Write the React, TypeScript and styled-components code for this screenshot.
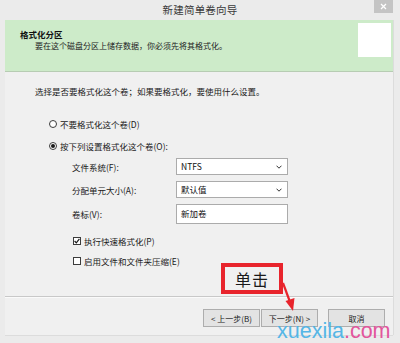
import React from "react";
import styled, { createGlobalStyle } from "styled-components";

const Global = createGlobalStyle`
  html, body { margin: 0; padding: 0; background: #ebebeb; }
  body { font-family: "Noto Sans CJK SC", "Noto Sans", sans-serif; }
  * { box-sizing: border-box; }
`;

const Window = styled.div`
  position: relative;
  width: 400px;
  height: 343px;
  background: #ebebeb;
  display: flex;
  flex-direction: column;
  overflow: hidden;
`;

const TitleBar = styled.div`
  height: 20px;
  display: grid;
  grid-template-columns: 1fr auto 1fr;
  align-items: start;
`;

const Title = styled.div`
  grid-column: 2;
  font-size: 10.5px;
  line-height: 20px;
  color: #3a3a3a;
  letter-spacing: 0.2px;
`;

const CloseBtn = styled.div`
  grid-column: 3;
  justify-self: end;
  margin-right: 7px;
  width: 19px;
  height: 13px;
  background: #c4c4c4;
  display: flex;
  align-items: center;
  justify-content: center;
`;

const Frame = styled.div`
  flex: 1;
  margin: 0 7px 8px 5px;
  background: #f0f0f0;
  display: flex;
  flex-direction: column;
  box-shadow: 1px 0 0 #dcdcdc, 0 1px 0 #dcdcdc;
`;

const Header = styled.div`
  height: 52px;
  background: #cdebc9;
  border-bottom: 1px solid #b7ccb3;
  display: flex;
  padding: 3px 2px 0 15px;
`;

const HeaderText = styled.div`
  display: flex;
  flex-direction: column;
  padding-top: 5px;
`;

const HeaderTitle = styled.div`
  font-size: 8.5px;
  font-weight: 700;
  line-height: 12px;
  color: #111;
`;

const HeaderSub = styled.div`
  font-size: 8px;
  line-height: 11px;
  color: #222;
  padding-left: 15px;
`;

const IconBox = styled.div`
  margin-left: auto;
  width: 33px;
  height: 34px;
  background: #ffffff;
`;

const Body = styled.div`
  flex: 1;
  display: flex;
  flex-direction: column;
  padding: 13px 0 0 30px;
  font-size: 8.5px;
  color: #1a1a1a;
`;

const Line = styled.div`
  line-height: 12px;
  height: 12px;
`;

const OptionRow = styled.div<{ $indent: number; $top: number }>`
  display: flex;
  align-items: center;
  gap: 3px;
  height: 12px;
  line-height: 12px;
  margin-left: ${(p) => p.$indent}px;
  margin-top: ${(p) => p.$top}px;
`;

const Radio = styled.span<{ $on?: boolean }>`
  width: 8px;
  height: 8px;
  border-radius: 50%;
  border: 1px solid #3c3c3c;
  background: #fff;
  display: inline-flex;
  align-items: center;
  justify-content: center;
  &::after {
    content: "";
    width: 4px;
    height: 4px;
    border-radius: 50%;
    background: ${(p) => (p.$on ? "#1a1a1a" : "transparent")};
  }
`;

const Check = styled.span`
  width: 8px;
  height: 8px;
  border: 1px solid #3c3c3c;
  background: #fff;
  display: inline-flex;
  align-items: center;
  justify-content: center;
`;

const FormGrid = styled.div`
  display: grid;
  grid-template-columns: 104px 112px;
  grid-template-rows: 17px 17px 20px;
  row-gap: 6px;
  align-items: center;
  margin: 6px 0 0 37px;
`;

const Label = styled.div`
  line-height: 12px;
`;

const Field = styled.div<{ $tall?: boolean }>`
  height: ${(p) => (p.$tall ? 20 : 17)}px;
  background: #fff;
  border: 1px solid #ababab;
  display: flex;
  align-items: ${(p) => (p.$tall ? "flex-start" : "center")};
  padding: ${(p) => (p.$tall ? "3px 4px 0" : "0 5px 0 4px")};
  font-size: 8.5px;
  line-height: 11px;
  color: #111;
`;

const FieldText = styled.span`
  flex: 1;
`;

const Footer = styled.div`
  height: 39px;
  border-top: 1px solid #c8c8c8;
  box-shadow: inset 0 1px 0 #fafafa;
  display: flex;
  justify-content: flex-end;
  align-items: flex-start;
  padding: 12px 8px 0 0;
`;

const Button = styled.div<{ $gap?: number }>`
  width: 57px;
  height: 18px;
  border: 1px solid #adadad;
  background: #e3e3e3;
  font-size: 8px;
  color: #1a1a1a;
  display: flex;
  align-items: center;
  justify-content: center;
  margin-left: ${(p) => p.$gap ?? 0}px;
`;

const Callout = styled.div`
  position: absolute;
  left: 221px;
  top: 263px;
  width: 62px;
  height: 31px;
  border: 4px solid #e8242c;
  background: #f0f0f0;
  display: flex;
  align-items: center;
  justify-content: center;
  font-size: 16px;
  color: #1a1a1a;
  letter-spacing: 1px;
`;

const ArrowSvg = styled.svg`
  position: absolute;
  left: 276px;
  top: 280px;
`;

const Watermark = styled.div`
  position: absolute;
  left: 277px;
  top: 318px;
  font-family: "Liberation Sans", Arial, sans-serif;
  font-size: 21.5px;
  line-height: 26px;
  color: #55b6e6;
  letter-spacing: 0;
`;

const Pink = styled.span`
  color: #e2569c;
`;

const Chevron = () => (
  <svg width="6" height="4" viewBox="0 0 6 4">
    <path d="M0.5 0.7 L3 3.2 L5.5 0.7" fill="none" stroke="#333" strokeWidth="1" />
  </svg>
);

export default function App() {
  return (
    <>
      <Global />
      <Window>
        <TitleBar>
          <Title>新建简单卷向导</Title>
          <CloseBtn>
            <svg width="7" height="7" viewBox="0 0 7 7">
              <path d="M1 1 L6 6 M6 1 L1 6" stroke="#fff" strokeWidth="1.3" />
            </svg>
          </CloseBtn>
        </TitleBar>
        <Frame>
          <Header>
            <HeaderText>
              <HeaderTitle>格式化分区</HeaderTitle>
              <HeaderSub>要在这个磁盘分区上储存数据，你必须先将其格式化。</HeaderSub>
            </HeaderText>
            <IconBox />
          </Header>
          <Body>
            <Line>选择是否要格式化这个卷；如果要格式化，要使用什么设置。</Line>
            <OptionRow $indent={14} $top={21}>
              <Radio />
              <span>不要格式化这个卷(D)</span>
            </OptionRow>
            <OptionRow $indent={14} $top={10}>
              <Radio $on />
              <span>按下列设置格式化这个卷(O):</span>
            </OptionRow>
            <FormGrid>
              <Label>文件系统(F):</Label>
              <Field>
                <FieldText>NTFS</FieldText>
                <Chevron />
              </Field>
              <Label>分配单元大小(A):</Label>
              <Field>
                <FieldText>默认值</FieldText>
                <Chevron />
              </Field>
              <Label>卷标(V):</Label>
              <Field $tall>新加卷</Field>
            </FormGrid>
            <OptionRow $indent={38} $top={11}>
              <Check>
                <svg width="6" height="6" viewBox="0 0 6 6">
                  <path d="M0.6 3 L2.3 4.8 L5.4 0.8" fill="none" stroke="#1a1a1a" strokeWidth="1.2" />
                </svg>
              </Check>
              <span>执行快速格式化(P)</span>
            </OptionRow>
            <OptionRow $indent={38} $top={8}>
              <Check />
              <span>启用文件和文件夹压缩(E)</span>
            </OptionRow>
          </Body>
          <Footer>
            <Button>&lt; 上一步(B)</Button>
            <Button $gap={1}>下一步(N) &gt;</Button>
            <Button $gap={10}>取消</Button>
          </Footer>
        </Frame>
        <Callout>单击</Callout>
        <ArrowSvg width="24" height="36" viewBox="0 0 24 36">
          <path d="M7 3 L14 22" stroke="#e8242c" strokeWidth="2.2" fill="none" />
          <path d="M9.5 21 L18.5 18 L17 31 Z" fill="#e8242c" />
        </ArrowSvg>
        <Watermark>
          xuexila<Pink>.com</Pink>
        </Watermark>
      </Window>
    </>
  );
}
